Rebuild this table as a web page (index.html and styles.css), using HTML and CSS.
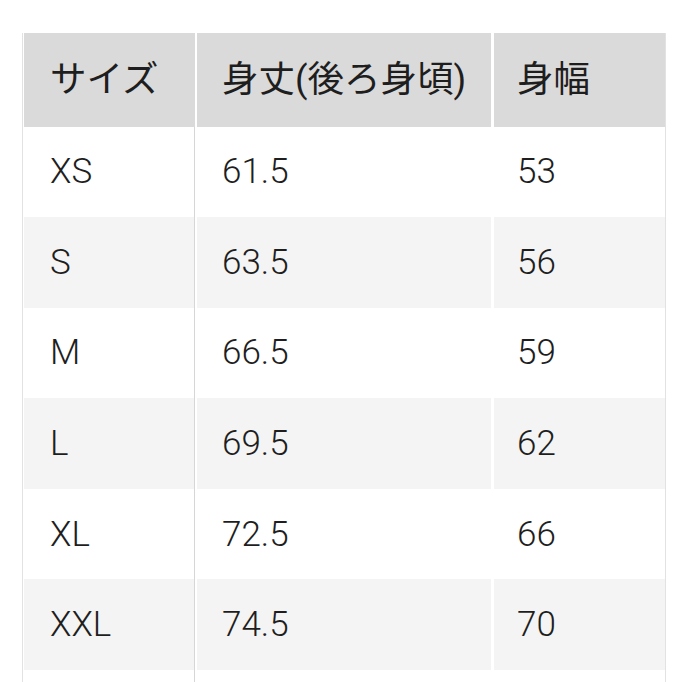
FILE: index.html
```html
<!DOCTYPE html>
<html lang="ja">
<head>
<meta charset="utf-8">
<title>サイズ表</title>
<link rel="stylesheet" href="styles.css">
</head>
<body>
<div class="sheet">
  <div class="size-table">
    <div class="cell head">サイズ</div>
    <div class="cell head">身丈(後ろ身頃)</div>
    <div class="cell head">身幅</div>

    <div class="cell first">XS</div><div class="cell">61.5</div><div class="cell">53</div>
    <div class="cell first alt">S</div><div class="cell alt">63.5</div><div class="cell alt">56</div>
    <div class="cell first">M</div><div class="cell">66.5</div><div class="cell">59</div>
    <div class="cell first alt">L</div><div class="cell alt">69.5</div><div class="cell alt">62</div>
    <div class="cell first">XL</div><div class="cell">72.5</div><div class="cell">66</div>
    <div class="cell first alt">XXL</div><div class="cell alt">74.5</div><div class="cell alt">70</div>
    <div class="cell first"></div><div class="cell"></div><div class="cell"></div>
  </div>
</div>
</body>
</html>
```

FILE: styles.css
```css
html, body {
  margin: 0;
  padding: 0;
  background: #ffffff;
}
body {
  width: 682px;
  height: 682px;
  overflow: hidden;
  font-family: Roboto, "Noto Sans CJK JP", sans-serif;
  color: #1e1e1e;
}
.sheet {
  padding: 33px 0 0 22px;
}
.size-table {
  display: grid;
  grid-template-columns: 171px 294px 172px;
  grid-template-rows: 93.5px repeat(6, 90.6px) 12px;
  column-gap: 2px;
  width: 644px;
  border-left: 1px solid #e2e2e2;
  border-right: 1px solid #e2e2e2;
  padding-left: 1px;
  box-sizing: border-box;
}
.cell {
  display: flex;
  align-items: center;
  padding-left: 26px;
  font-size: 35px;
  font-weight: 300;
  line-height: 1;
  background: #ffffff;
}
.head {
  background: #dadada;
  font-size: 36.5px;
  font-weight: 400;
  padding-top: 1px;
}
.alt {
  background: #f4f4f4;
}
.first {
  border-right: 1px solid #d6d6d6;
}
.size-table .cell:nth-child(3n+2) {
  padding-left: 25px;
}
.size-table .cell:nth-child(3n) {
  margin-left: 1px;
  padding-left: 23px;
}
```
